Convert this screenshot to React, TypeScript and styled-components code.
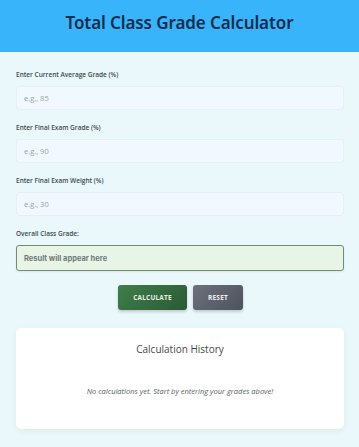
import React, { useState } from "react";
import styled, { createGlobalStyle } from "styled-components";

const Global = createGlobalStyle`
  html, body { margin: 0; padding: 0; background: #eaf8fc; }
  body { font-family: "Open Sans", "Noto Sans", sans-serif; }
  * { box-sizing: border-box; }
`;

const Page = styled.div`
  min-height: 447px;
  background: #eaf8fc;
`;

const Header = styled.header`
  height: 52px;
  background: #38b4fa;
  display: flex;
  align-items: center;
  justify-content: center;
  padding-bottom: 8px;
`;

const Title = styled.h1`
  margin: 0;
  font-family: "Noto Sans", "Open Sans", sans-serif;
  font-weight: 600;
  font-size: 17px;
  letter-spacing: -0.1px;
  color: #0f2d4e;
`;

const Main = styled.main`
  padding: 18px 15px 16px 16px;
  display: flex;
  flex-direction: column;
`;

const Field = styled.div<{ $last?: boolean }>`
  display: flex;
  flex-direction: column;
  margin-bottom: ${(p) => (p.$last ? "0" : "13px")};
`;

const Label = styled.label`
  font-family: "Open Sans", "Noto Sans", sans-serif;
  font-size: 6.5px;
  line-height: 10px;
  font-weight: 600;
  color: #3a4a4a;
  margin-bottom: 6px;
`;

const Input = styled.input`
  height: 24px;
  width: 100%;
  border: 1px solid #e4eff8;
  border-radius: 3px;
  background: #f1f8ff;
  padding: 0 7px;
  font-family: "Open Sans", sans-serif;
  font-size: 7.5px;
  color: #333;
  outline: none;
  &::placeholder { color: #9aa3a8; }
`;

const Result = styled.div`
  height: 26px;
  border: 1px solid #6e8f70;
  border-radius: 3px;
  background: #e8f5e6;
  display: flex;
  align-items: center;
  padding: 0 7px;
  font-family: "Inter", "Lato", sans-serif;
  font-weight: 700;
  font-size: 7.5px;
  color: #6f7a76;
  box-shadow: 0 1px 2px rgba(0,0,0,0.08);
`;

const Buttons = styled.div`
  display: flex;
  justify-content: center;
  gap: 6px;
  margin-top: 14px;
  margin-left: 1px;
`;

const Button = styled.button<{ $variant: "primary" | "secondary" }>`
  height: 25px;
  width: ${(p) => (p.$variant === "primary" ? "69px" : "50px")};
  border: none;
  border-radius: 3px;
  background: ${(p) =>
    p.$variant === "primary"
      ? "linear-gradient(135deg, #3f7e4c, #2b5a33)"
      : "linear-gradient(135deg, #6d717d, #4d525c)"};
  color: ${(p) => (p.$variant === "primary" ? "#e6f4e1" : "#eceef3")};
  font-family: "Open Sans", sans-serif;
  font-weight: 700;
  font-size: 6.5px;
  letter-spacing: 0.2px;
  text-transform: uppercase;
  box-shadow: 0 2px 3px rgba(0,0,0,0.18);
  cursor: pointer;
`;

const Card = styled.section`
  margin-top: 18px;
  height: 101px;
  background: #ffffff;
  border-radius: 5px;
  box-shadow: 0 2px 6px rgba(0,0,0,0.06);
  display: flex;
  flex-direction: column;
  align-items: center;
  padding-top: 14px;
`;

const CardTitle = styled.h2`
  margin: 0;
  font-family: "Open Sans", "Noto Sans", sans-serif;
  font-weight: 500;
  font-size: 10px;
  line-height: 14px;
  color: #3f4a45;
`;

const Empty = styled.p`
  margin: 30px 0 0;
  font-family: "Open Sans", sans-serif;
  font-style: italic;
  font-size: 7.5px;
  line-height: 10px;
  color: #5a5f60;
`;

const fields = [
  { id: "avg", label: "Enter Current Average Grade (%)", ph: "e.g., 85" },
  { id: "exam", label: "Enter Final Exam Grade (%)", ph: "e.g., 90" },
  { id: "weight", label: "Enter Final Exam Weight (%)", ph: "e.g., 30" },
];

export default function App() {
  const [vals, setVals] = useState<Record<string, string>>({ avg: "", exam: "", weight: "" });
  const [result, setResult] = useState<string | null>(null);
  return (
    <Page>
      <Global />
      <Header>
        <Title>Total Class Grade Calculator</Title>
      </Header>
      <Main>
        {fields.map((f) => (
          <Field key={f.id}>
            <Label htmlFor={f.id}>{f.label}</Label>
            <Input
              id={f.id}
              type="number"
              placeholder={f.ph}
              value={vals[f.id]}
              onChange={(e) => setVals({ ...vals, [f.id]: e.target.value })}
            />
          </Field>
        ))}
        <Field $last>
          <Label>Overall Class Grade:</Label>
          <Result>{result ?? "Result will appear here"}</Result>
        </Field>
        <Buttons>
          <Button
            $variant="primary"
            onClick={() => {
              const a = parseFloat(vals.avg), e = parseFloat(vals.exam), w = parseFloat(vals.weight);
              if ([a, e, w].some(isNaN)) return;
              setResult((a * (1 - w / 100) + e * (w / 100)).toFixed(2) + "%");
            }}
          >
            Calculate
          </Button>
          <Button
            $variant="secondary"
            onClick={() => {
              setVals({ avg: "", exam: "", weight: "" });
              setResult(null);
            }}
          >
            Reset
          </Button>
        </Buttons>
        <Card>
          <CardTitle>Calculation History</CardTitle>
          <Empty>No calculations yet. Start by entering your grades above!</Empty>
        </Card>
      </Main>
    </Page>
  );
}
